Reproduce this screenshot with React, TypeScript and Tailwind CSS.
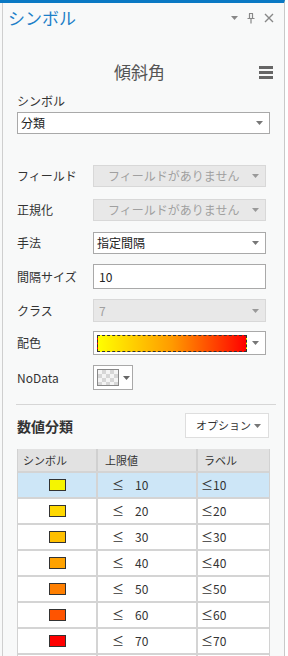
import React from 'react'

const font = { fontFamily: '"Noto Sans CJK JP", "Noto Sans", sans-serif' }

function Caret({ color = '#777' }: { color?: string }) {
  return (
    <svg width="7" height="4" viewBox="0 0 7 4" className="shrink-0">
      <path d="M0 0h7L3.5 4z" fill={color} />
    </svg>
  )
}

function Field({
  label,
  children,
  top,
}: {
  label: string
  children: React.ReactNode
  top: string
}) {
  return (
    <div className={`flex items-center ${top}`}>
      <div className="w-[76px] shrink-0 text-[12px] leading-[16px] text-[#333]">{label}</div>
      {children}
    </div>
  )
}

const rows = [
  { v: 10, c: '#f5f500' },
  { v: 20, c: '#ffd800' },
  { v: 30, c: '#ffc000' },
  { v: 40, c: '#ffa200' },
  { v: 50, c: '#ff7f00' },
  { v: 60, c: '#ff5400' },
  { v: 70, c: '#ff0000' },
]

export default function App() {
  return (
    <div className="flex h-[656px] w-[288px] overflow-hidden bg-white" style={font}>
      <div className="w-[285px] shrink-0 overflow-hidden border-r border-[#c9c9c9] border-t-[3px] border-t-[#0a79c4] bg-[#f8f9f9] pl-[2px]">
        <div className="h-full border-l border-[#cfcfcf]">
          {/* title bar */}
          <div className="flex h-[30px] items-center pl-[5px] pr-[10px]">
            <div className="text-[17px] leading-[30px] text-[#1c7fc8]">シンボル</div>
            <div className="ml-auto flex items-center gap-[9px]">
              <Caret color="#888" />
              <svg width="8" height="11" viewBox="0 0 8 11">
                <path d="M2 0.5h4M2.5 0.5v5M5.5 0.5v5M0.5 5.5h7M4 5.5v5" stroke="#888" strokeWidth="1.2" fill="none" />
              </svg>
              <svg width="10" height="10" viewBox="0 0 10 10">
                <path d="M1 1l8 8M9 1l-8 8" stroke="#888" strokeWidth="1.4" />
              </svg>
            </div>
          </div>

          {/* header */}
          <div className="relative mt-[27px] flex h-[24px] items-center justify-center pr-[8px]">
            <div className="text-[17px] leading-[24px] text-[#555]">傾斜角</div>
            <div className="absolute right-[11px] top-[6px] flex flex-col gap-[2px]">
              <div className="h-[3px] w-[14px] bg-[#666]" />
              <div className="h-[3px] w-[14px] bg-[#666]" />
              <div className="h-[3px] w-[14px] bg-[#666]" />
            </div>
          </div>

          <div className="pl-[14px] pr-[14px]">
            <div className="mt-[10px] h-[14px] text-[12px] leading-[14px] text-[#333]">シンボル</div>
            <div className="mt-[4px] flex h-[22px] items-center border border-[#a9a9a9] bg-white pl-[3px] pr-[6px] text-[12px] text-[#222]">
              分類
              <span className="ml-auto"><Caret /></span>
            </div>

            <Field label="フィールド" top="mt-[31px]">
              <div className="flex h-[22px] w-[173px] items-center whitespace-nowrap border border-[#d8d8d8] bg-[#e8e8e8] pl-[14px] pr-[6px] text-[12px] text-[#a0a0a0]">
                フィールドがありません
                <span className="ml-auto"><Caret color="#999" /></span>
              </div>
            </Field>
            <Field label="正規化" top="mt-[12px]">
              <div className="flex h-[22px] w-[173px] items-center whitespace-nowrap border border-[#d8d8d8] bg-[#e8e8e8] pl-[14px] pr-[6px] text-[12px] text-[#a0a0a0]">
                フィールドがありません
                <span className="ml-auto"><Caret color="#999" /></span>
              </div>
            </Field>
            <Field label="手法" top="mt-[11px]">
              <div className="flex h-[22px] w-[173px] items-center border border-[#a9a9a9] bg-white pl-[3px] pr-[6px] text-[12px] text-[#222]">
                指定間隔
                <span className="ml-auto"><Caret /></span>
              </div>
            </Field>
            <Field label="間隔サイズ" top="mt-[10px]">
              <div className="flex h-[25px] w-[173px] items-center border border-[#a9a9a9] bg-white pl-[5px] text-[12px] text-[#222]">
                10
              </div>
            </Field>
            <Field label="クラス" top="mt-[10px]">
              <div className="flex h-[23px] w-[173px] items-center border border-[#d8d8d8] bg-[#e8e8e8] pl-[5px] pr-[6px] text-[12px] text-[#a0a0a0]">
                7
                <span className="ml-auto"><Caret color="#999" /></span>
              </div>
            </Field>
            <Field label="配色" top="mt-[9px]">
              <div className="flex h-[24px] w-[173px] items-center border border-[#a9a9a9] bg-white pl-[3px] pr-[6px]">
                <div className="h-[17px] w-[150px] border border-dashed border-[#333] bg-[linear-gradient(to_right,#ffff00,#ff9a00_50%,#ff2000_90%,#ff0000)]" />
                <span className="ml-auto"><Caret /></span>
              </div>
            </Field>
            <Field label="NoData" top="mt-[10px]">
              <div className="flex h-[25px] w-[40px] items-center gap-[4px] border border-[#a9a9a9] bg-white pl-[3px]">
                <div className="h-[17px] w-[22px] border border-[#888] bg-[conic-gradient(#d6d6d6_25%,#f4f4f4_0_50%,#d6d6d6_0_75%,#f4f4f4_0)] bg-[length:8px_8px]" />
                <Caret color="#666" />
              </div>
            </Field>

            <div className="-ml-[1px] mt-[14px] h-[1px] w-[260px] bg-[#d6d6d6]" />

            <div className="mt-[8px] flex h-[25px] items-center pr-[1px]">
              <div className="text-[14px] font-bold leading-[20px] text-[#333]">数値分類</div>
              <div className="ml-auto flex h-[25px] w-[84px] items-center whitespace-nowrap border border-[#dedede] bg-white pl-[10px] pr-[7px] text-[11px] text-[#333]">
                オプション
                <span className="ml-auto"><Caret /></span>
              </div>
            </div>

            <div className="mt-[11px] w-[253px] border-x border-[#d2d2d2] bg-white text-[12px] text-[#333]">
              <div className="flex h-[22px] items-center bg-[#e2e2e2] text-[11px]">
                <div className="flex h-full w-[80px] items-center border-r-2 border-[#d0d0d0] pl-[5px]">シンボル</div>
                <div className="flex h-full w-[100px] items-center border-r-2 border-[#d0d0d0] pl-[7px]">上限値</div>
                <div className="pl-[6px]">ラベル</div>
              </div>
              {rows.map((r, i) => (
                <div
                  key={r.v}
                  className={`flex h-[26px] items-center border-t-2 border-[#d4d4d4] ${i === 0 ? 'bg-[#cde6f7]' : 'bg-white'}`}
                >
                  <div className="flex h-full w-[80px] items-center justify-center border-r-2 border-[#d4d4d4]">
                    <div className="h-[12px] w-[17px] border border-[#333]" style={{ backgroundColor: r.c }} />
                  </div>
                  <div className="flex h-full w-[100px] items-center border-r-2 border-[#d4d4d4] pl-[14px]">
                    ≤<span className="ml-[11px]">{r.v}</span>
                  </div>
                  <div className="pl-[3px]">≤{r.v}</div>
                </div>
              ))}
              <div className="flex h-[26px] border-t-2 border-[#d4d4d4] bg-white">
                <div className="h-full w-[80px] border-r-2 border-[#d4d4d4]" />
                <div className="h-full w-[100px] border-r-2 border-[#d4d4d4]" />
              </div>
            </div>
          </div>
        </div>
      </div>
    </div>
  )
}
